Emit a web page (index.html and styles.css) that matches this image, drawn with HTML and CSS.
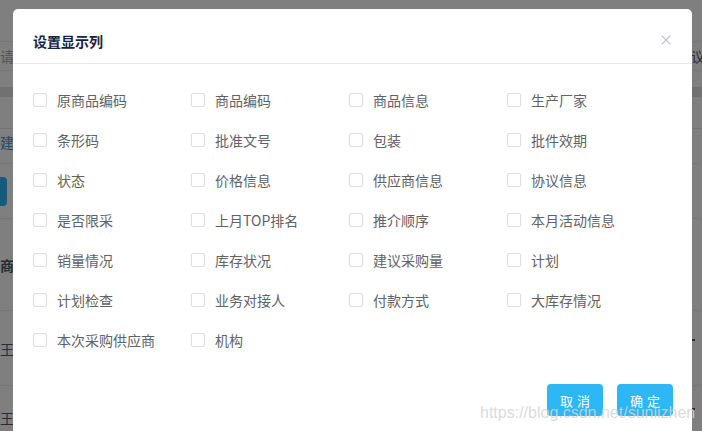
FILE: index.html
```html
<!DOCTYPE html>
<html lang="zh-CN">
<head>
<meta charset="utf-8">
<title>设置显示列</title>
<link rel="stylesheet" href="styles.css">
</head>
<body>
<div class="page">
  <div class="bg">
    <div class="r r1"></div>
    <div class="r r2"><span class="ph">请输入商品名称</span><span class="dark">协议</span></div>
    <div class="r r3"><div class="band"></div></div>
    <div class="r r4"><span class="blue">建议采购</span></div>
    <div class="r r5"><span class="bbtn"></span></div>
    <div class="r r6"><span class="dark bold">商品信息</span></div>
    <div class="r r7"><span class="dark">王小明</span><span class="mark"></span></div>
    <div class="r r8"><span class="dark">王小明</span><span class="mark"></span></div>
  </div>

  <div class="mask">
    <div class="dialog">
      <div class="dlg-header">
        <span class="dlg-title">设置显示列</span>
        <span class="dlg-close">
          <svg width="12" height="12" viewBox="0 0 12 12"><path d="M1.7 1.7 L10.3 10.3 M10.3 1.7 L1.7 10.3" stroke="#b9bec6" stroke-width="1.2" fill="none"/></svg>
        </span>
      </div>
      <div class="dlg-body">
        <label class="cb"><span class="box"></span><span class="txt">原商品编码</span></label>
        <label class="cb"><span class="box"></span><span class="txt">商品编码</span></label>
        <label class="cb"><span class="box"></span><span class="txt">商品信息</span></label>
        <label class="cb"><span class="box"></span><span class="txt">生产厂家</span></label>
        <label class="cb"><span class="box"></span><span class="txt">条形码</span></label>
        <label class="cb"><span class="box"></span><span class="txt">批准文号</span></label>
        <label class="cb"><span class="box"></span><span class="txt">包装</span></label>
        <label class="cb"><span class="box"></span><span class="txt">批件效期</span></label>
        <label class="cb"><span class="box"></span><span class="txt">状态</span></label>
        <label class="cb"><span class="box"></span><span class="txt">价格信息</span></label>
        <label class="cb"><span class="box"></span><span class="txt">供应商信息</span></label>
        <label class="cb"><span class="box"></span><span class="txt">协议信息</span></label>
        <label class="cb"><span class="box"></span><span class="txt">是否限采</span></label>
        <label class="cb"><span class="box"></span><span class="txt">上月TOP排名</span></label>
        <label class="cb"><span class="box"></span><span class="txt">推介顺序</span></label>
        <label class="cb"><span class="box"></span><span class="txt">本月活动信息</span></label>
        <label class="cb"><span class="box"></span><span class="txt">销量情况</span></label>
        <label class="cb"><span class="box"></span><span class="txt">库存状况</span></label>
        <label class="cb"><span class="box"></span><span class="txt">建议采购量</span></label>
        <label class="cb"><span class="box"></span><span class="txt">计划</span></label>
        <label class="cb"><span class="box"></span><span class="txt">计划检查</span></label>
        <label class="cb"><span class="box"></span><span class="txt">业务对接人</span></label>
        <label class="cb"><span class="box"></span><span class="txt">付款方式</span></label>
        <label class="cb"><span class="box"></span><span class="txt">大库存情况</span></label>
        <label class="cb"><span class="box"></span><span class="txt">本次采购供应商</span></label>
        <label class="cb"><span class="box"></span><span class="txt">机构</span></label>
      </div>
      <div class="dlg-footer">
        <button class="btn">取消</button>
        <button class="btn">确定</button>
      </div>
    </div>
  </div>

  <div class="watermark">https://blog.csdn.net/sunlizhen</div>
</div>
</body>
</html>
```

FILE: styles.css
```css
* { box-sizing: border-box; }
html, body { margin: 0; padding: 0; }
body {
  font-family: "Noto Sans CJK SC", "Noto Sans", sans-serif;
  background: #fff;
}
.page {
  position: relative;
  width: 702px;
  height: 431px;
  overflow: hidden;
}

/* underlying page */
.bg {
  display: flex;
  flex-direction: column;
  font-size: 14px;
}
.r {
  display: flex;
  justify-content: space-between;
  align-items: center;
  border-bottom: 1px solid #e8eaec;
  flex: none;
}
.r1 { height: 42px; }
.r2 { height: 29px; }
.r3 { height: 58px; border-bottom-color: #e6e6e6; align-items: flex-start; }
.r4 { height: 35px; align-items: flex-start; padding-top: 3px; }
.r5 { height: 55px; }
.r6 { height: 92px; align-items: flex-start; padding-top: 36px; }
.r7 { height: 75px; align-items: flex-start; padding-top: 28px; }
.r8 { height: 60px; align-items: flex-start; padding-top: 22px; border-bottom: 0; }
.band {
  width: 100%;
  height: 10px;
  margin-top: 16px;
  background: #e2e2e2;
}
.ph { color: #a8a8a8; line-height: 20px; }
.dark { color: #515a6e; line-height: 20px; margin-right: -3px; }
.bold { font-weight: 700; }
.blue { color: #2d9bf0; line-height: 20px; }
.bbtn {
  display: block;
  width: 40px;
  height: 29px;
  margin-left: -33px;
  border-radius: 4px;
  background: #2db7f5;
}
.mark {
  display: block;
  width: 3px;
  height: 2px;
  background: #515a6e;
  margin-right: 7px;
}

/* overlay + dialog */
.mask {
  position: absolute;
  inset: 0;
  background: rgba(0, 0, 0, 0.5);
}
.dialog {
  position: relative;
  width: 679px;
  margin: 9px 0 0 13px;
  background: #fff;
  border-radius: 5px;
}
.dlg-header {
  height: 55px;
  padding: 21px 20px 0;
  border-bottom: 1px solid #e8eaec;
}
.dlg-title {
  display: block;
  font-size: 14px;
  line-height: 22px;
  font-weight: 700;
  color: #17233d;
}
.dlg-close {
  position: absolute;
  left: 647px;
  top: 25px;
  width: 12px;
  height: 12px;
  display: block;
  line-height: 0;
}
.dlg-body {
  display: grid;
  grid-template-columns: repeat(4, 158px);
  grid-auto-rows: 40px;
  padding: 16px 20px 0;
}
.cb {
  display: flex;
  align-items: center;
  gap: 10px;
  font-size: 14px;
  color: #606266;
}
.box {
  width: 14px;
  height: 14px;
  border: 1px solid #dcdee2;
  border-radius: 2px;
  background: #fff;
  flex: none;
}
.txt { line-height: 20px; }
.dlg-footer {
  display: flex;
  justify-content: flex-end;
  gap: 14px;
  padding: 24px 19px 20px;
}
.btn {
  width: 56px;
  height: 32px;
  padding: 0 0 0 4px;
  border: 0;
  border-radius: 4px;
  background: #2db7f5;
  color: #fff;
  font-family: "Noto Sans CJK SC", sans-serif;
  font-size: 13px;
  letter-spacing: 4px;
}

.watermark {
  position: absolute;
  left: 480px;
  top: 405px;
  font-family: "Liberation Sans", Arial, sans-serif;
  font-size: 16px;
  line-height: 16px;
  color: rgba(212, 212, 212, 0.85);
  white-space: nowrap;
}
```
